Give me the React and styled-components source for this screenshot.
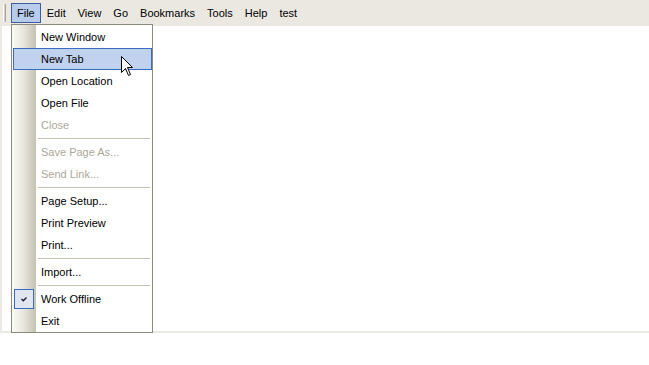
import React from "react";
import styled, { createGlobalStyle } from "styled-components";

const Global = createGlobalStyle`
  html, body { margin: 0; padding: 0; background: #ffffff; }
  body { font-family: "Liberation Sans", Arial, sans-serif; font-size: 11px; color: #000; }
`;

const Page = styled.div`
  position: relative;
  width: 649px;
  height: 365px;
  background: #ffffff;
  overflow: hidden;
`;

const MenuBar = styled.div`
  display: flex;
  align-items: center;
  height: 26px;
  background: #ebe8e1;
  padding-left: 3px;
  box-sizing: border-box;
`;

const Grip = styled.div`
  width: 1px;
  height: 18px;
  border-left: 1px solid #ffffff;
  border-right: 1px solid #a8a598;
  background: #d4d0c6;
  margin-right: 5px;
`;

const Titles = styled.div`
  display: flex;
  gap: 0;
`;

const Title = styled.div`
  height: 20px;
  line-height: 18px;
  padding: 0 5px;
  box-sizing: border-box;
  border: 1px solid ${(p) => (p.$active ? "#3d5d9c" : "transparent")};
  background: ${(p) => (p.$active ? "#b7cbeb" : "transparent")};
  white-space: nowrap;
`;

const Content = styled.div`
  height: 305px;
  border-left: 2px solid #ece9e3;
  border-bottom: 2px solid #ece9e3;
  background: #ffffff;
`;

const Dropdown = styled.div`
  position: absolute;
  left: 11px;
  top: 24px;
  width: 142px;
  box-sizing: border-box;
  border: 1px solid #8d8b7f;
  padding-top: 1px;
  display: flex;
  flex-direction: column;
  background:
    linear-gradient(to right, #fbfbf8 0px, #e6e5dc 12px, #c4c2b0 24px, transparent 24px),
    #ffffff;
  background-repeat: no-repeat;
`;

const Item = styled.div`
  display: flex;
  align-items: center;
  height: 22px;
  box-sizing: border-box;
  margin-left: ${(p) => (p.$hover ? "1px" : "0")};
  padding-left: ${(p) => (p.$hover ? "0" : "1px")};
  border: 1px solid ${(p) => (p.$hover ? "#3a6cc4" : "transparent")};
  background: ${(p) => (p.$hover ? "#c1d2ee" : "transparent")};
  color: ${(p) => (p.$disabled ? "#aca899" : "#000000")};
  white-space: nowrap;
`;

const IconSlot = styled.span`
  flex: none;
  width: 20px;
  height: 20px;
  margin-right: 7px;
  box-sizing: border-box;
  display: flex;
  align-items: center;
  justify-content: center;
  border: 1px solid ${(p) => (p.$checked ? "#3a6cc4" : "transparent")};
  background: ${(p) => (p.$checked ? "#e1e6ee" : "transparent")};
`;

const Label = styled.span`
  line-height: 20px;
`;

const Separator = styled.div`
  height: 5px;
  display: flex;
  align-items: center;
  padding-left: 26px;
  padding-right: 2px;
  &::after {
    content: "";
    flex: 1;
    height: 1px;
    background: #c5c2b2;
  }
`;

const Cursor = styled.svg`
  position: absolute;
  left: 121px;
  top: 56px;
`;

const menu = [
  { label: "New Window" },
  { label: "New Tab", hover: true },
  { label: "Open Location" },
  { label: "Open File" },
  { label: "Close", disabled: true },
  { sep: true },
  { label: "Save Page As...", disabled: true },
  { label: "Send Link...", disabled: true },
  { sep: true },
  { label: "Page Setup..." },
  { label: "Print Preview" },
  { label: "Print..." },
  { sep: true },
  { label: "Import..." },
  { sep: true },
  { label: "Work Offline", checked: true },
  { label: "Exit" },
];

const titles = ["File", "Edit", "View", "Go", "Bookmarks", "Tools", "Help", "test"];

export default function App() {
  return (
    <Page>
      <Global />
      <MenuBar>
        <Grip />
        <Titles>
          {titles.map((t, i) => (
            <Title key={t} $active={i === 0}>
              {t}
            </Title>
          ))}
        </Titles>
      </MenuBar>
      <Content />
      <Dropdown>
        {menu.map((m, i) =>
          m.sep ? (
            <Separator key={i} />
          ) : (
            <Item key={i} $hover={m.hover} $disabled={m.disabled}>
              <IconSlot $checked={m.checked}>
                {m.checked && (
                  <svg width="6" height="5" viewBox="0 0 6 5">
                    <path d="M0.5 2 L2.3 3.8 L5.5 0.6" fill="none" stroke="#1a1a3a" strokeWidth="1.4" />
                  </svg>
                )}
              </IconSlot>
              <Label>{m.label}</Label>
            </Item>
          )
        )}
      </Dropdown>
      <Cursor width="13" height="21" viewBox="0 0 13 21">
        <path
          d="M0.5 0.5 L0.5 16.5 L4.5 12.5 L7.5 19.5 L9.5 18.5 L6.5 11.5 L11.5 11.5 Z"
          fill="#ffffff"
          stroke="#000000"
          strokeWidth="1"
        />
      </Cursor>
    </Page>
  );
}
